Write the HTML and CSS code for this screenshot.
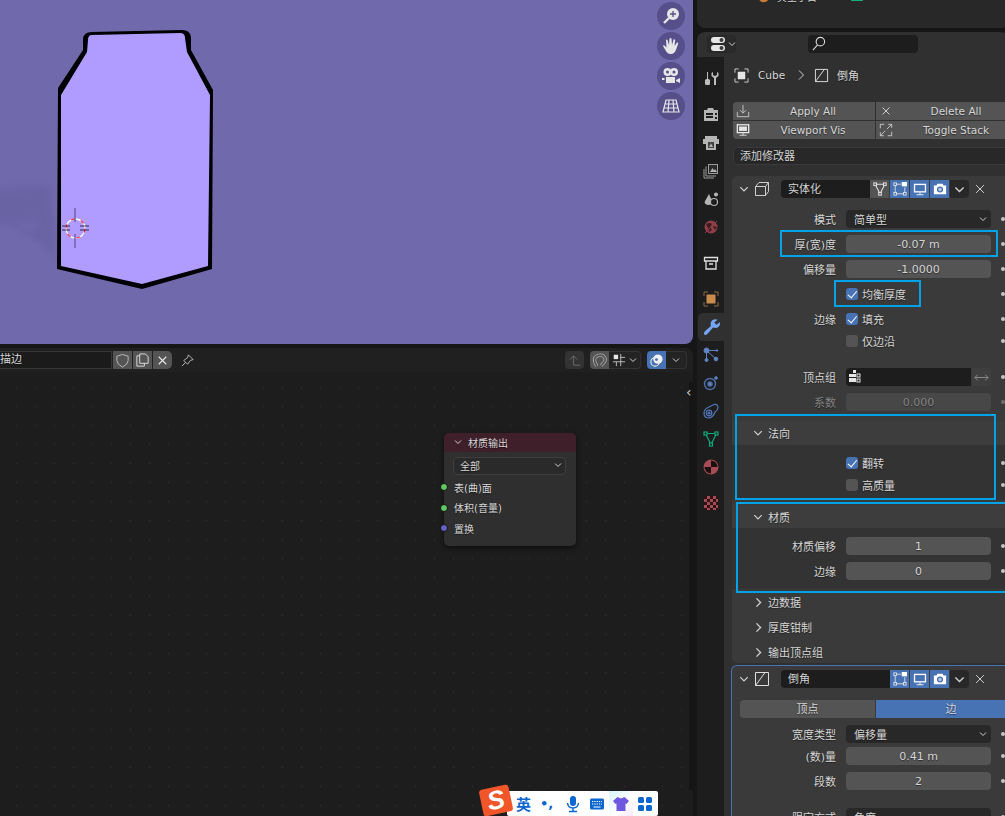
FILE: index.html
```html
<!DOCTYPE html>
<html lang="zh">
<head>
<meta charset="utf-8">
<title>Blender</title>
<link rel="stylesheet" href="styles.css">
</head>
<body>
<div class="app">
  <div class="left">
    <section class="viewport">
      <svg class="scene" viewBox="0 0 693 344" width="693" height="344">
        <defs><filter id="soft"><feGaussianBlur stdDeviation="3"/></filter></defs>
        <path d="M-10 190 Q25 184 50 186 L58 262 L45 248 Q35 240 36 222 L-10 226 Z" fill="#5f5895" opacity=".32" filter="url(#soft)"/>
        <path d="M12 226 Q26 236 40 240 L40 232 Q24 232 16 224 Z" fill="#5f5895" opacity=".4" filter="url(#soft)"/>
        <path d="M57 269 L142 289 L212 269 L213 90 L191 50 L191 37 Q190 30 182 30 L92 32 Q83 32 83 40 L83 50 L58 88 Z" fill="#000"/>
        <path d="M61 266 L142 284 L208 266 L210 95 L187 52 L185 38 Q185 33 180 33 L92 35 Q88 35 88 40 L87 52 L61 95 Z" fill="#b09cff"/>
        <circle cx="75.500" cy="228.500" r="9.500" fill="none" stroke="#fff" stroke-width="1.300"/>
        <circle cx="75.500" cy="228.500" r="9.500" fill="none" stroke="#f0304a" stroke-width="1.300" stroke-dasharray="4 6"/>
        <path d="M75 208V222M75 234V248" stroke="#6c62a8" stroke-width="1.500"/>
        <path d="M62 226H70M62 230H70M80 226H89M80 230H89" stroke="#111" stroke-width=".8"/>
      </svg>
      <div class="gizmos">
        <button class="gizmo"><svg viewBox="0 0 20 20"><circle cx="12" cy="8" r="6" fill="#e6e6e6"/><path d="M8 12L3 17" stroke="#e6e6e6" stroke-width="2.400"/><path d="M9 8H15M12 5V11" stroke="#564f8a" stroke-width="1.300"/></svg></button>
        <button class="gizmo"><svg viewBox="0 0 20 20"><path d="M5 15L2 10Q2 9 3.500 9.500L5.500 11.500L5 4Q5.500 3 6.500 4L8 9L8.500 2.500Q9.500 1.500 10.500 2.500L11 9L12.500 3.500Q13.500 2.800 14.200 4L13.500 10L16 6.500Q17.200 6.300 17.200 7.500L15 14Q13 18.500 9.500 18Q6.500 18 5 15Z" fill="#e6e6e6"/></svg></button>
        <button class="gizmo"><svg viewBox="0 0 20 20"><circle cx="6.500" cy="6" r="4" fill="#e6e6e6"/><circle cx="13" cy="6" r="4" fill="#e6e6e6"/><circle cx="6.500" cy="6" r="1.500" fill="#564f8a"/><circle cx="13" cy="6" r="1.500" fill="#564f8a"/><path d="M5 11H14V17H5ZM1 12H3.500V14H1ZM15 14L19 12V17L15 15Z" fill="#e6e6e6"/></svg></button>
        <button class="gizmo"><svg viewBox="0 0 20 20" fill="none" stroke="#e6e6e6" stroke-width="1.200"><path d="M5 4H15L18 16H2ZM4 8H16M3 12H17M8 4L7 16M12 4L13 16"/></svg></button>
      </div>
    </section>

    <section class="nodes">
      <header class="nodes-bar">
        <div class="name-group">
          <span class="name-field">描边</span>
          <button class="bar-btn"><svg class="ico" viewBox="0 0 16 16" fill="none" stroke="#bdbdbd"><path d="M8 1.500L14 3.500V8Q14 12 8 15Q2 12 2 8V3.500Z"/></svg></button>
          <button class="bar-btn"><svg class="ico" viewBox="0 0 16 16" fill="none" stroke="#e0e0e0"><path d="M5 3H2V14H10V11M5 1H11L14 4V11H5Z"/></svg></button>
          <button class="bar-btn bar-end"><svg class="ico" viewBox="0 0 16 16" fill="none" stroke="#e6e6e6" stroke-width="1.200"><path d="M4 4L12 12M12 4L4 12"/></svg></button>
        </div>
        <svg class="ico pin" viewBox="0 0 16 16" fill="none" stroke="#bdbdbd"><path d="M9 2L14 7L11 8L8 12L4 8L8 5ZM6 10L2 14"/></svg>
        <div class="bar-right">
          <button class="bar-btn dim"><svg class="ico" viewBox="0 0 16 16" fill="none" stroke="#6b6b6b"><path d="M3 7L7 3L11 7M7 3V13H14"/></svg></button>
          <div class="bar-group">
            <button class="bar-btn"><svg class="ico" viewBox="0 0 16 16" fill="none" stroke-linecap="butt"><path d="M5 14L3 9.500Q1.500 4 7 2.500Q12 1.500 14 6Q14.500 8.500 12.500 10.500L9.500 13.500" stroke="#a8a8a8" stroke-width="3.600"/><path d="M5 14L3 9.500Q1.500 4 7 2.500Q12 1.500 14 6Q14.500 8.500 12.500 10.500L9.500 13.500" stroke="#545454" stroke-width="1.800"/></svg></button>
            <button class="bar-drop"><svg class="ico" viewBox="0 0 16 16" fill="none" stroke="#c8c8c8"><rect x="2" y="2" width="5" height="5" fill="#e6e6e6" stroke="none"/><path d="M10 1V15M5 10V15M1 10H15M9 5H15"/></svg><svg class="chev" viewBox="0 0 8 8"><path d="M1 2.500L4 5.500L7 2.500"/></svg></button>
          </div>
          <div class="bar-group">
            <button class="bar-btn on"><svg class="ico" viewBox="0 0 16 16"><circle cx="9.500" cy="6.500" r="5" fill="#f0f0f0"/><circle cx="6.500" cy="9.500" r="4.500" fill="none" stroke="#f0f0f0" stroke-width="1.200"/><circle cx="8" cy="7" r="1.500" fill="#4772b3"/></svg></button>
            <button class="bar-drop wide"><svg class="chev" viewBox="0 0 8 8"><path d="M1 2.500L4 5.500L7 2.500"/></svg></button>
          </div>
        </div>
      </header>

      <div class="graph">
        <div class="side-strip"><span class="strip-arrow">‹</span></div>
        <article class="node">
          <div class="node-head"><svg class="chev" viewBox="0 0 8 8"><path d="M1 2.500L4 5.500L7 2.500"/></svg>材质输出</div>
          <div class="node-select"><span>全部</span><svg class="chev" viewBox="0 0 8 8"><path d="M1 2.500L4 5.500L7 2.500"/></svg></div>
          <div class="socket"><i class="pt green"></i>表(曲)面</div>
          <div class="socket"><i class="pt green"></i>体积(音量)</div>
          <div class="socket"><i class="pt violet"></i>置换</div>
        </article>
        <div class="ime">
          <span class="ime-logo"><b>S</b></span>
          <div class="ime-bar">
            <span class="ime-lang">英</span>
            <span class="ime-punc">•,</span>
            <svg class="ime-ico" viewBox="0 0 16 18" fill="#0b66d0"><rect x="5" y="1" width="6" height="10" rx="3"/><path d="M2.500 8Q3 13 8 13Q13 13 13.500 8M8 13V16M4 16.500H12" fill="none" stroke="#0b66d0" stroke-width="1.500"/></svg>
            <svg class="ime-ico" viewBox="0 0 16 18" fill="none"><rect x="1" y="3.500" width="14" height="11" rx="1.500" fill="#0b66d0"/><path d="M3 6.500H13M3 9H13" stroke="#fff" stroke-dasharray="1.300 1"/><path d="M4.500 12H11.500" stroke="#fff"/></svg>
            <span class="ime-skin"><svg class="ime-ico" viewBox="0 0 16 18"><path d="M4.500 2L8 3.500L11.500 2L16 6L13.500 9L12.500 8.500V16H3.500V8.500L2.500 9L0 6Z" fill="#6f57e0"/></svg></span>
            <svg class="ime-ico" viewBox="0 0 16 18" fill="#0b66d0"><rect x="1" y="2" width="6" height="6" rx="1.500"/><rect x="9" y="2" width="6" height="6" rx="1.500"/><rect x="1" y="10" width="6" height="6" rx="1.500"/><rect x="9" y="10" width="6" height="6" rx="1.500"/></svg>
          </div>
        </div>
      </div>
    </section>
  </div>

  <div class="right">
    <section class="outliner">
      <div class="out-row">
        <svg class="ico" viewBox="0 0 16 16"><path d="M1 8H15Q13 16 6 15Q2 14 1 8Z" fill="#c97a35"/></svg>
        <span class="out-text">其空子目</span>
        <svg class="ico" viewBox="0 0 16 16" fill="none" stroke="#17b07f" stroke-width="1.500"><path d="M2 8V13H14V8"/></svg>
      </div>
    </section>

    <section class="props">
      <header class="props-bar">
        <button class="type-btn">
          <svg class="type-ico" viewBox="0 0 15 14"><rect x="0" y="0" width="14" height="6" rx="3" fill="#e6e6e6"/><circle cx="10.500" cy="3" r="2" fill="#3a3a3a"/><rect x="0" y="8" width="14" height="6" rx="3" fill="#e6e6e6"/><circle cx="10.500" cy="11" r="2" fill="#3a3a3a"/></svg>
          <svg class="chev" viewBox="0 0 8 8"><path d="M1 2.500L4 5.500L7 2.500"/></svg>
        </button>
        <div class="search"><svg class="ico" viewBox="0 0 16 16" fill="none" stroke="#d8d8d8" stroke-width="1.200"><circle cx="10" cy="6" r="4.500"/><path d="M7 9.500L2 15"/></svg></div>
      </header>
      <div class="props-main">
        <nav class="tabs">
          <div class="tab"><svg class="ico" viewBox="0 0 16 16" fill="#bdbdbd"><rect x="2" y="9" width="5" height="6" rx="1.500"/><rect x="4" y="2" width="1" height="7"/><path d="M10 2V5L12 6L14 5V2L15.500 3V6L13 8V15H11V8L8.500 6V3Z"/></svg></div>
          <div class="tab gap"><svg class="ico" viewBox="0 0 16 16" fill="#b5b5b5"><path d="M1 4H4L5 2H10L11 4H15V15H1ZM3 7V9H10V7ZM3 10V12H10V10ZM12 7V9H14V7ZM12 11V13H14V11Z" fill-rule="evenodd"/></svg></div>
          <div class="tab one"><svg class="ico" viewBox="0 0 16 16" fill="#b5b5b5"><path d="M2 1H14V4H16V9H13V15H3V9H0V4H2Z"/><path d="M5 7H11V13H5Z" fill="#444"/><path d="M6 12L8 8.500L10 12Z" fill="#b5b5b5"/></svg></div>
          <div class="tab"><svg class="ico" viewBox="0 0 16 16" fill="none" stroke="#9c9c9c"><rect x="5.500" y="1.500" width="9" height="9" fill="#2a2a2a"/><path d="M3 3.500V13H13M1 6V15H11"/><path d="M7 9L9.500 5L11 7.500L12 6L14 9Z" fill="#b5b5b5" stroke="none"/></svg></div>
          <div class="tab"><svg class="ico" viewBox="0 0 16 16"><path d="M6 3L10 12Q9 14 5.500 14Q2 14 1.500 11Z" fill="#b5b5b5"/><circle cx="13" cy="3.500" r="2" fill="#b5b5b5"/><circle cx="11" cy="11" r="3.500" fill="#1d1d1d" stroke="#b5b5b5" stroke-width="1.100"/></svg></div>
          <div class="tab"><svg class="ico" viewBox="0 0 16 16"><circle cx="8" cy="8" r="6.500" fill="#8f3d47"/><path d="M3 5Q7 3 9 5L7 8L9 11L6 13L5 9ZM10 7L14 8L12 11Z" fill="#3a1e22"/><path d="M2 14L14 2" stroke="#8f3d47"/></svg></div>
          <div class="tab gap"><svg class="ico" viewBox="0 0 16 16" fill="none" stroke="#e0e0e0" stroke-width="1.300"><path d="M1.500 2.500H14.500V6H1.500ZM3 6V14H13V6M6 9H10"/></svg></div>
          <div class="tab gap"><svg class="ico" viewBox="0 0 16 16" fill="none" stroke="#8f6a48"><path d="M1 5V1H5M11 1H15V5M15 11V15H11M5 15H1V11"/><rect x="3.500" y="3.500" width="9" height="9" fill="#c98a4e" stroke="none"/></svg></div>
          <div class="tab active"><svg class="ico big" viewBox="0 0 16 16" fill="#76a5f5"><path d="M1.500 15Q0 13.500 1.500 12L7 7Q6 3 9 1.500Q11 .5 13 1.500L10 4L12 6L15 3.500Q15.500 6 14 7.500Q12 9.500 9 8.500L4 14Q2.800 15.500 1.500 15Z"/></svg></div>
          <div class="tab"><svg class="ico" viewBox="0 0 16 16" fill="#5f86c4" stroke="#5f86c4"><circle cx="3.500" cy="3.500" r="2.500"/><circle cx="13" cy="12" r="1.800"/><circle cx="3.500" cy="13" r="1.500"/><circle cx="14" cy="3.500" r=".8"/><path d="M3.500 3.500V13M3.500 3.500L13 12M3.500 3.500H14" fill="none"/></svg></div>
          <div class="tab"><svg class="ico" viewBox="0 0 16 16" fill="none" stroke="#4e70a8" stroke-width="1.400"><circle cx="7" cy="9" r="5.500"/><circle cx="7" cy="9" r="2" fill="#5f86c4"/><circle cx="13" cy="3" r="1.800" fill="#5f86c4" stroke="none"/></svg></div>
          <div class="tab"><svg class="ico" viewBox="0 0 16 16" fill="none" stroke="#5078b8" stroke-width="1.200"><path d="M1 10Q1 6 6 4L11 1.500Q15 1 15 4.500Q15 7 12 9Q10 15 5 15Q1 14.500 1 10Z"/><circle cx="6" cy="10" r="2.800"/><circle cx="6" cy="10" r="1" fill="#5f86c4"/></svg></div>
          <div class="tab"><svg class="ico" viewBox="0 0 16 16" fill="none" stroke="#12a87a" stroke-width="1.200"><path d="M2.500 2.500H13.500L8 13.500Z"/><rect x="1" y="1" width="3" height="3" fill="#1d1d1d"/><rect x="12" y="1" width="3" height="3" fill="#1d1d1d"/><rect x="6.500" y="12" width="3" height="3" fill="#1d1d1d"/></svg></div>
          <div class="tab"><svg class="ico" viewBox="0 0 16 16"><circle cx="8" cy="8" r="7.500" fill="#a54c56"/><path d="M8 8V1.500A6.500 6.500 0 0 1 14.500 8Z" fill="#1c1011"/><path d="M8 8V14.500A6.500 6.500 0 0 1 1.500 8Z" fill="#1c1011"/></svg></div>
          <div class="tab gap"><svg class="ico" viewBox="0 0 16 16"><rect x="1" y="1" width="14" height="14" fill="#a54c56"/><path d="M1 1H4V4H1ZM7 1H10V4H7ZM13 1H15V4H13ZM4 4H7V7H4ZM10 4H13V7H10ZM1 7H4V10H1ZM7 7H10V10H7ZM13 7H15V10H13ZM4 10H7V13H4ZM10 10H13V13H10ZM1 13H4V15H1ZM7 13H10V15H7ZM13 13H15V15H13Z" fill="#2a1416"/></svg></div>
        </nav>

        <div class="content">
          <div class="crumbs">
            <svg class="ico" viewBox="0 0 16 16" fill="none" stroke="#cfcfcf"><path d="M1 5V1H5M11 1H15V5M15 11V15H11M5 15H1V11"/><rect x="4" y="4" width="8" height="8" fill="#e6e6e6" stroke="none"/></svg>
            <span class="crumb-name">Cube</span>
            <svg class="crumb-sep" viewBox="0 0 8 12" fill="none" stroke="#d0d0d0"><path d="M2 1.500L6.500 6L2 10.500"/></svg>
            <svg class="ico" viewBox="0 0 16 16" fill="none" stroke="#e0e0e0"><path d="M1.500 1.500H14.500V14.500H1.500ZM1.500 14.500L11 1.500"/></svg>
            <span class="crumb-name2">倒角</span>
          </div>

          <div class="actions">
            <button class="act"><svg class="ico act-ico" viewBox="0 0 16 16" fill="none" stroke="#cfcfcf"><path d="M8 1V10M4.500 7L8 10.500L11.500 7M1.500 9V14.500H14.500V9"/></svg>Apply All</button>
            <button class="act"><svg class="ico act-ico" viewBox="0 0 16 16" fill="none" stroke="#e0e0e0"><path d="M4 4L12 12M12 4L4 12"/></svg>Delete All</button>
            <button class="act"><svg class="ico act-ico" viewBox="0 0 16 16"><rect x="1.500" y="2" width="13" height="9" fill="#545454" stroke="#e6e6e6" stroke-width="1.500"/><rect x="3.500" y="4" width="9" height="5" fill="#e6e6e6"/><path d="M8 11V14M4 14H12" stroke="#e6e6e6"/></svg>Viewport Vis</button>
            <button class="act"><svg class="ico act-ico" viewBox="0 0 16 16" fill="none" stroke="#cfcfcf"><path d="M1.500 6V1.500H6M10 14.500H14.500V10M9 7L14.500 1.500M10.500 1.500H14.500V5.500M7 9L1.500 14.500M1.500 10.500V14.500H5.500"/></svg>Toggle Stack</button>
          </div>
          <div class="add-mod">添加修改器</div>

          <article class="modifier">
            <div class="mod-head">
              <svg class="chev head-chev" viewBox="0 0 8 8"><path d="M1 2.500L4 5.500L7 2.500"/></svg>
              <svg class="ico mod-ico" viewBox="0 0 16 16" fill="none" stroke="#cfcfcf"><path d="M1.500 5.500H11.500V14.500H1.500ZM1.500 5.500L5 1.500H14.500V10.500L11.500 14.500M11.500 5.500L14.500 1.500"/></svg>
              <div class="mod-name">实体化</div>
              <button class="mod-btn"><svg class="ico" viewBox="0 0 16 16" fill="none" stroke="#e0e0e0" stroke-width="1.200"><path d="M2.500 2.500H13.500L8 13.500Z"/><rect x="1" y="1" width="3" height="3" fill="#545454"/><rect x="12" y="1" width="3" height="3" fill="#545454"/><rect x="6.500" y="12" width="3" height="3" fill="#545454"/></svg></button>
              <button class="mod-btn on"><svg class="ico" viewBox="0 0 16 16" fill="none" stroke="#e6e6e6"><path d="M2.500 4V12M4 13.500H12M13.500 12V6M4 2.500H9"/><rect x="1" y="1" width="3" height="3"/><rect x="1" y="12" width="3" height="3"/><rect x="12" y="12" width="3" height="3"/><rect x="10" y="0" width="6" height="5" fill="#fff" stroke="none"/></svg></button>
              <button class="mod-btn on"><svg class="ico" viewBox="0 0 16 16"><rect x="1" y="2" width="14" height="10" fill="#fff"/><rect x="2.500" y="3.500" width="11" height="7" fill="#4772b3"/><path d="M8 12V14M4 14.500H12" stroke="#fff"/></svg></button>
              <button class="mod-btn on"><svg class="ico" viewBox="0 0 16 16"><path d="M1 4H4L5 2H11L12 4H15V14H1Z" fill="#fff"/><circle cx="8" cy="8.500" r="3.500" fill="#4772b3"/><circle cx="8" cy="8.500" r="2" fill="#fff" opacity=".6"/></svg></button>
              <button class="mod-more"><svg class="chev lg" viewBox="0 0 8 8"><path d="M1 2.500L4 5.500L7 2.500"/></svg></button>
              <svg class="ico mod-x" viewBox="0 0 16 16" fill="none" stroke="#e0e0e0"><path d="M3.500 3.500L12.500 12.500M12.500 3.500L3.500 12.500"/></svg>
            </div>

            <div class="row first"><label>模式</label><div class="select"><span>简单型</span><svg class="chev" viewBox="0 0 8 8"><path d="M1 2.500L4 5.500L7 2.500"/></svg></div><i class="dot"></i></div>
            <div class="row"><label>厚(宽)度</label><div class="num">-0.07 m</div><i class="dot"></i></div>
            <div class="row"><label>偏移量</label><div class="num">-1.0000</div><i class="dot"></i></div>
            <div class="row"><label></label><div class="check"><b class="box on"></b>均衡厚度</div><i class="dot"></i></div>
            <div class="row"><label>边缘</label><div class="check"><b class="box on"></b>填充</div><i class="dot"></i></div>
            <div class="row tight"><label></label><div class="check"><b class="box"></b>仅边沿</div><i class="dot"></i></div>
            <div class="row far"><label>顶点组</label><div class="vg"><span class="vg-field"><svg class="ico" viewBox="0 0 16 16" fill="#e6e6e6"><rect x="6" y="1" width="3" height="3"/><rect x="2" y="5" width="4" height="3"/><rect x="6" y="5" width="3" height="3"/><rect x="10" y="5" width="3" height="3" fill="none" stroke="#e6e6e6"/><rect x="2" y="9" width="4" height="4"/><rect x="6" y="9" width="3" height="4"/><rect x="10" y="10" width="3" height="3" fill="none" stroke="#e6e6e6"/></svg></span><span class="vg-swap"><svg class="ico" viewBox="0 0 16 16" fill="none" stroke="#8f8f8f"><path d="M1 8H15M4 5L1 8L4 11M12 5L15 8L12 11"/></svg></span></div><i class="dot"></i></div>
            <div class="row muted"><label>系数</label><div class="num">0.000</div><i class="dot"></i></div>

            <section class="sub normals">
              <div class="sub-head"><svg class="chev head-chev" viewBox="0 0 8 8"><path d="M1 2.500L4 5.500L7 2.500"/></svg>法向</div>
              <div class="row sub-first"><label></label><div class="check"><b class="box on"></b>翻转</div><i class="dot"></i></div>
              <div class="row tight"><label></label><div class="check"><b class="box"></b>高质量</div><i class="dot"></i></div>
            </section>
            <section class="sub mats">
              <div class="sub-head"><svg class="chev head-chev" viewBox="0 0 8 8"><path d="M1 2.500L4 5.500L7 2.500"/></svg>材质</div>
              <div class="row sub-first"><label>材质偏移</label><div class="num">1</div><i class="dot"></i></div>
              <div class="row"><label>边缘</label><div class="num">0</div><i class="dot"></i></div>
            </section>
            <div class="fold first-fold"><svg class="chev side" viewBox="0 0 8 8"><path d="M2.500 1L5.500 4L2.500 7"/></svg>边数据</div>
            <div class="fold"><svg class="chev side" viewBox="0 0 8 8"><path d="M2.500 1L5.500 4L2.500 7"/></svg>厚度钳制</div>
            <div class="fold"><svg class="chev side" viewBox="0 0 8 8"><path d="M2.500 1L5.500 4L2.500 7"/></svg>输出顶点组</div>

            <span class="mark m-thick"></span>
            <span class="mark m-even"></span>
            <span class="mark m-normal"></span>
            <span class="mark m-mat"></span>
          </article>

          <article class="modifier active-mod">
            <div class="mod-head">
              <svg class="chev head-chev" viewBox="0 0 8 8"><path d="M1 2.500L4 5.500L7 2.500"/></svg>
              <svg class="ico mod-ico" viewBox="0 0 16 16" fill="none" stroke="#e0e0e0"><path d="M1.500 1.500H14.500V14.500H1.500ZM1.500 14.500L11 1.500"/></svg>
              <div class="mod-name short">倒角</div>
              <button class="mod-btn on"><svg class="ico" viewBox="0 0 16 16" fill="none" stroke="#e6e6e6"><path d="M2.500 4V12M4 13.500H12M13.500 12V6M4 2.500H9"/><rect x="1" y="1" width="3" height="3"/><rect x="1" y="12" width="3" height="3"/><rect x="12" y="12" width="3" height="3"/><rect x="10" y="0" width="6" height="5" fill="#fff" stroke="none"/></svg></button>
              <button class="mod-btn on"><svg class="ico" viewBox="0 0 16 16"><rect x="1" y="2" width="14" height="10" fill="#fff"/><rect x="2.500" y="3.500" width="11" height="7" fill="#4772b3"/><path d="M8 12V14M4 14.500H12" stroke="#fff"/></svg></button>
              <button class="mod-btn on"><svg class="ico" viewBox="0 0 16 16"><path d="M1 4H4L5 2H11L12 4H15V14H1Z" fill="#fff"/><circle cx="8" cy="8.500" r="3.500" fill="#4772b3"/><circle cx="8" cy="8.500" r="2" fill="#fff" opacity=".6"/></svg></button>
              <button class="mod-more"><svg class="chev lg" viewBox="0 0 8 8"><path d="M1 2.500L4 5.500L7 2.500"/></svg></button>
              <svg class="ico mod-x" viewBox="0 0 16 16" fill="none" stroke="#e0e0e0"><path d="M3.500 3.500L12.500 12.500M12.500 3.500L3.500 12.500"/></svg>
            </div>
            <div class="seg"><span>顶点</span><span class="seg-on">边</span></div>
            <div class="row seg-next"><label>宽度类型</label><div class="select"><span>偏移量</span><svg class="chev" viewBox="0 0 8 8"><path d="M1 2.500L4 5.500L7 2.500"/></svg></div><i class="dot"></i></div>
            <div class="row near"><label>(数)量</label><div class="num">0.41 m</div><i class="dot"></i></div>
            <div class="row"><label>段数</label><div class="num">2</div><i class="dot"></i></div>
            <div class="row far"><label>限定方式</label><div class="select"><span>角度</span></div><i class="dot"></i></div>
          </article>
        </div>
      </div>
    </section>
  </div>
</div>
</body>
</html>
```

FILE: styles.css
```css
* { box-sizing: border-box; }
html, body { margin: 0; height: 100%; overflow: hidden; }
body {
  background: #161616;
  font-family: "DejaVu Sans", "Noto Sans CJK SC", sans-serif;
  font-size: 11px;
  color: #d6d6d6;
  text-shadow: 0 1px 1px rgba(0, 0, 0, .45);
}
button { font: inherit; color: inherit; border: 0; padding: 0; background: none; text-shadow: inherit; }
svg { display: block; flex: none; }
.app { display: grid; grid-template-columns: 693px 308px; column-gap: 4px; width: 1005px; height: 816px; overflow: hidden; }
.left { display: flex; flex-direction: column; gap: 4px; min-width: 0; height: 816px; }
.right { display: flex; flex-direction: column; gap: 4px; height: 816px; min-width: 0; }

.ico { width: 16px; height: 16px; }
.chev { width: 8px; height: 8px; fill: none; stroke: #d0d0d0; stroke-width: 1; }
.chev.lg { width: 11px; height: 11px; }
.chev.side { width: 11px; height: 11px; }

/* viewport */
.viewport { position: relative; height: 344px; background: #7069ab; border-bottom-right-radius: 8px; overflow: hidden; flex: none; }
.scene { width: 693px; height: 344px; }
.gizmos { position: absolute; top: 2px; left: 657px; display: flex; flex-direction: column; gap: 2px; }
.gizmo { width: 28px; height: 28px; border-radius: 50%; background: #564f8a; display: flex; align-items: center; justify-content: center; }
.gizmo svg { width: 20px; height: 20px; }

/* node editor */
.nodes { flex: 1; display: flex; flex-direction: column; min-height: 0; background: #1d1d1d; border-top-right-radius: 8px; overflow: hidden; }
.nodes-bar { height: 24px; padding: 3px 6px 3px 0; display: flex; align-items: center; background: #202020; flex: none; }
.name-group { display: flex; height: 18px; }
.name-field { width: 112px; background: #1b1b1b; border: 1px solid #363636; border-left: 0; line-height: 16px; }
.bar-btn { width: 19px; height: 18px; background: #545454; display: flex; align-items: center; justify-content: center; margin-left: 1px; }
.bar-btn .ico { width: 15px; height: 15px; }
.bar-end { border-radius: 0 5px 5px 0; }
.pin { width: 15px; height: 15px; margin-left: 8px; }
.bar-right { margin-left: auto; display: flex; gap: 6px; }
.bar-btn.dim { background: #333; border-radius: 4px; margin: 0; }
.bar-group { display: flex; height: 18px; }
.bar-group .bar-btn { margin: 0; border-radius: 4px 0 0 4px; }
.bar-btn.on { background: #4772b3; }
.bar-drop { height: 18px; width: 32px; display: flex; align-items: center; justify-content: center; gap: 3px; background: #232323; border: 1px solid #333; border-left: 0; border-radius: 0 4px 4px 0; }
.bar-drop .ico { width: 14px; height: 14px; }
.bar-drop.wide { width: 21px; }

.graph {
  position: relative; flex: 1;
  background-color: #1d1d1d;
  background-image: radial-gradient(circle at center, #2b2b2b 0.8px, transparent 1.1px);
  background-size: 19px 19px;
  background-position: 7px 6px;
}
.side-strip { position: absolute; left: 689px; top: 10px; width: 4px; height: 408px; background: #151515; }
.strip-arrow { position: absolute; left: -3px; top: 2px; font-size: 14px; line-height: 16px; color: #cfcfcf; }

.node { position: absolute; left: 444px; top: 61px; width: 132px; height: 113px; background: #2f2f2f; border-radius: 5px; box-shadow: 0 2px 5px rgba(0, 0, 0, .55); font-size: 10px; }
.node-head { height: 19px; background: #3f1f2a; border-radius: 5px 5px 0 0; display: flex; align-items: center; gap: 6px; padding: 0 0 1px 10px; }
.node-select { margin: 5px 10px 0 9px; height: 18px; border: 1px solid #3f3f3f; border-radius: 4px; background: #2a2a2a; display: flex; align-items: center; justify-content: space-between; padding: 0 3px 2px 6px; }
.socket { position: relative; height: 20.500px; display: flex; align-items: center; padding-left: 10px; }
.node-select + .socket { margin-top: 2px; }
.pt { position: absolute; left: -4px; top: 6px; width: 8px; height: 8px; border-radius: 50%; border: 1px solid #111; }
.pt.green { background: #63c763; }
.pt.violet { background: #6363c7; }

.ime { position: absolute; left: 480px; top: 414px; width: 178px; height: 30px; }
.ime-logo { position: absolute; left: 1px; top: 1px; width: 30px; height: 27px; background: #f0562a; border-radius: 3px; transform: rotate(-12deg); display: flex; align-items: center; justify-content: center; z-index: 1; }
.ime-logo b { color: #fff; font: italic bold 26px/27px "Liberation Sans", sans-serif; text-shadow: none; }
.ime-bar { position: absolute; left: 27px; top: 5px; width: 151px; height: 25px; background: #fff; border-radius: 2px; display: flex; align-items: center; padding-left: 9px; gap: 8px; }
.ime-lang { color: #0b66d0; font-size: 15px; font-weight: 700; text-shadow: none; width: 16px; }
.ime-punc { color: #0b66d0; font-size: 13px; font-weight: 700; text-shadow: none; width: 17px; }
.ime-ico { width: 16px; height: 18px; }
.ime-skin { background: linear-gradient(135deg, #d8f4ff, #fff 60%, #f7e6ff); width: 24px; height: 25px; display: flex; align-items: center; justify-content: center; margin: 0 -4px; }

/* outliner */
.outliner { height: 28px; background: #282828; border-radius: 0 0 8px 8px; overflow: hidden; flex: none; margin-right: -4px; }
.out-row { display: flex; align-items: center; height: 16px; margin-top: -12px; padding-left: 60px; gap: 6px; font-size: 10px; }
.out-row .ico { width: 14px; height: 14px; }
.out-text { width: 67px; }

/* properties */
.props { flex: 1; min-height: 0; background: #303030; border-radius: 8px 8px 0 0; display: flex; flex-direction: column; overflow: hidden; margin-right: -4px; }
.props-bar { height: 25px; flex: none; display: flex; align-items: center; padding: 3px 0 4px 10px; }
.type-btn { width: 29px; height: 18px; background: #2a2a2a; border: 1px solid #272727; border-radius: 4px; display: flex; align-items: center; gap: 2px; padding-left: 3px; }
.type-ico { width: 15px; height: 14px; }
.search { width: 110px; height: 18px; margin-left: 72px; background: #1d1d1d; border-radius: 4px; padding: 1px 0 0 3px; }
.search .ico { width: 15px; height: 15px; }
.props-main { flex: 1; display: flex; min-height: 0; }

.tabs { width: 27px; flex: none; background: #1d1d1d; padding-top: 7px; }
.tab { height: 28px; width: 27px; padding-left: 1px; display: flex; align-items: center; justify-content: center; }
.tab .ico.big { width: 18px; height: 18px; }
.tab.gap { margin-top: 8px; }
.tab.one { margin-top: 1px; }
.tab.active { background: #303030; border-radius: 5px 0 0 5px; margin-left: 1px; width: 26px; }

.content { width: 300px; flex: none; padding-left: 8px; overflow: hidden; }
.crumbs { height: 18px; margin-top: 9px; margin-left: 2px; display: flex; align-items: center; }
.crumbs .ico { width: 15px; height: 15px; }
.crumb-name { margin-left: 9px; width: 39px; font-size: 10.500px; }
.crumb-sep { width: 8px; height: 12px; margin-right: 9px; }
.crumb-name2 { margin-left: 8px; }

.actions { margin: 18px 0 0 1px; display: grid; grid-template-columns: 142px 142px; gap: 1px; border-radius: 4px; overflow: hidden; }
.act { position: relative; height: 18px; background: #545454; display: flex; align-items: center; justify-content: center; padding-left: 18px; font-size: 10.500px; }
.act-ico { position: absolute; left: 3px; top: 2px; width: 14px; height: 14px; }
.add-mod { margin: 8px 0 0 1px; height: 18px; width: 292px; background: #282828; border: 1px solid #3a3a3a; border-radius: 4px; padding-left: 6px; line-height: 18px; }

.modifier { position: relative; margin-top: 11px; width: 292px; height: 487px; background: #3a3a3a; border-radius: 5px; padding-top: 4px; }
.mod-head { display: flex; height: 18px; align-items: center; }
.head-chev { width: 10px; height: 10px; }
.mod-head .head-chev { margin-left: 7px; }
.mod-ico { width: 16px; height: 16px; margin-left: 5px; }
.mod-name { width: 89px; height: 18px; margin-left: 11px; background: #1d1d1d; border-radius: 4px 0 0 4px; padding-left: 7px; line-height: 19px; }
.mod-name.short { width: 109px; }
.mod-btn { width: 19px; height: 18px; margin-right: 1px; background: #545454; display: flex; align-items: center; justify-content: center; }
.mod-btn .ico { width: 14px; height: 14px; }
.mod-btn.on { background: #4772b3; }
.mod-more { width: 19px; height: 18px; background: #282828; border-radius: 0 4px 4px 0; display: flex; align-items: center; justify-content: center; }
.mod-x { width: 14px; height: 14px; margin-left: 4px; }

.row { display: grid; grid-template-columns: 104px 145px 4px; column-gap: 10px; align-items: center; height: 18px; margin-top: 7px; }
.row.first { margin-top: 12px; }
.row.tight { margin-top: 4px; }
.row.far { margin-top: 18px; }
.row.near { margin-top: 4px; }
.row label { text-align: right; }
.row.muted { color: #858585; }
.row.muted .num { background: #474747; }
.dot { width: 4px; height: 4px; border-radius: 50%; background: #c4c4c4; }
.row.muted .dot { background: #6f6f6f; }
.num { height: 18px; background: #545454; border-radius: 4px; text-align: center; line-height: 19px; }
.select { height: 18px; background: #282828; border-radius: 4px; display: flex; align-items: center; justify-content: space-between; padding: 0 4px 0 8px; }
.check { display: flex; align-items: center; gap: 4px; height: 18px; }
.box { display: block; position: relative; width: 12px; height: 12px; border-radius: 3px; background: #545454; }
.box.on { background: #4772b3; }
.box.on::after { content: ""; position: absolute; left: 3.500px; top: 1px; width: 4px; height: 7.500px; border: solid #fff; border-width: 0 1.800px 1.800px 0; transform: rotate(40deg); }
.vg { display: flex; gap: 1px; height: 18px; }
.vg-field { flex: 1; background: #1d1d1d; border-radius: 4px 0 0 4px; padding: 1px 0 0 1px; }
.vg-swap { width: 19px; background: #3f3f3f; border-radius: 0 4px 4px 0; display: flex; align-items: center; justify-content: center; }
.vg-swap .ico { width: 15px; height: 15px; }

.sub { background: #333; }
.sub-head { height: 24px; display: flex; align-items: center; background: #3d3d3d; padding-left: 21px; gap: 5px; }
.sub-first { margin-top: 9px; }
.normals { height: 79px; margin-top: 10px; }
.mats { height: 84px; margin-top: 5px; }
.mats .sub-head { height: 23px; }
.fold { height: 18px; margin-top: 7px; display: flex; align-items: center; gap: 4px; padding-left: 21px; }
.first-fold { margin-top: 4px; }

.mark { position: absolute; border: 2px solid #00a2e8; pointer-events: none; }
.m-thick { left: 48px; top: 54px; width: 218px; height: 27px; }
.m-even { left: 102px; top: 104px; width: 87px; height: 27px; }
.m-normal { left: 3px; top: 238px; width: 261px; height: 86px; }
.m-mat { left: 4px; top: 326px; width: 280px; height: 91px; }

.active-mod { margin-top: 3px; height: 200px; box-shadow: 0 0 0 1px #4772b3; }
.seg { display: grid; grid-template-columns: 135px 150px; gap: 1px; margin: 12px 0 0 8px; }
.seg span { height: 18px; background: #545454; text-align: center; line-height: 19px; border-radius: 4px 0 0 4px; }
.seg span.seg-on { background: #4772b3; border-radius: 0; }
.seg-next { margin-top: 7px; }
```
